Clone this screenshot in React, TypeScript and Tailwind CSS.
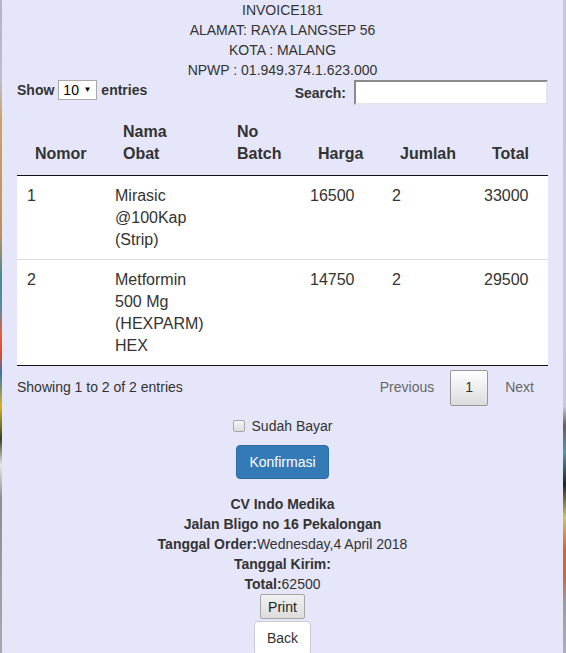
import React from 'react';

const items = [
  { no: '1', nama: 'Mirasic @100Kap (Strip)', batch: '', harga: '16500', jumlah: '2', total: '33000' },
  { no: '2', nama: 'Metformin 500 Mg (HEXPARM) HEX', batch: '', harga: '14750', jumlah: '2', total: '29500' },
];

const headers = ['Nomor', 'Nama Obat', 'No Batch', 'Harga', 'Jumlah', 'Total'];
const widths = ['w-[88px]', 'w-[114px]', 'w-[81px]', 'w-[82px]', 'w-[92px]', 'w-[74px]'];

export default function App() {
  return (
    <div className="flex min-h-screen font-['Liberation_Sans',Arial,sans-serif] text-[14px] text-[#333]">
      {/* bits of the page background showing at the edges */}
      <div className="w-[2px] shrink-0 bg-[linear-gradient(to_bottom,#b4b4c4_0%,#c0bccc_12%,#c9a46a_18%,#b89060_36%,#4c8a8c_42%,#5a8aa0_47%,#e0603c_51%,#d84c30_54%,#3876a8_57%,#d4b428_62%,#344420_67%,#e8e4e0_71%,#8e8e90_76%,#a8a8b0_100%)]" />
      <div className="flex-1 bg-[#e6e6fa] px-[15px]">
        <div className="text-center leading-[20px]">
          <div>INVOICE181</div>
          <div>ALAMAT: RAYA LANGSEP 56</div>
          <div>KOTA : MALANG</div>
          <div>NPWP : 01.949.374.1.623.000</div>
        </div>

        <div className="flex items-start justify-between">
          <div className="flex h-[20px] items-center font-bold">
            <span>Show</span>
            <div className="mx-[4px] flex h-[20px] w-[39px] items-center justify-between border border-[#a9a9a9] bg-white pl-[4px] pr-[5px] font-normal text-black">
              <span>10</span>
              <span className="text-[8px]">▼</span>
            </div>
            <span>entries</span>
          </div>
          <div className="flex items-center font-bold">
            <span className="mr-[8px] mt-[2px]">Search:</span>
            <input
              type="text"
              className="h-[25px] w-[194px] border-2 border-b-[#e4e4ec] border-l-[#8a8a8a] border-r-[#e4e4ec] border-t-[#8a8a8a] bg-white outline-none"
            />
          </div>
        </div>

        <table className="mt-[5px] w-full table-fixed border-collapse text-[16px] leading-[22px]">
          <colgroup>
            {widths.map((w, i) => (
              <col key={i} className={w} />
            ))}
          </colgroup>
          <thead>
            <tr>
              {headers.map((h) => (
                <th key={h} className="border-b border-[#111] px-[18px] pb-[10px] pt-[11px] text-left align-bottom font-bold">
                  {h}
                </th>
              ))}
            </tr>
          </thead>
          <tbody className="bg-white">
            {items.map((r, i) => (
              <tr key={r.no} className={i > 0 ? 'border-t border-[#ddd]' : ''}>
                <td className="px-[10px] pb-[8px] pt-[9px] align-top">{r.no}</td>
                <td className="px-[10px] pb-[8px] pt-[9px] align-top">{r.nama}</td>
                <td className="px-[10px] pb-[8px] pt-[9px] align-top">{r.batch}</td>
                <td className="px-[10px] pb-[8px] pt-[9px] align-top">{r.harga}</td>
                <td className="px-[10px] pb-[8px] pt-[9px] align-top">{r.jumlah}</td>
                <td className="px-[10px] pb-[8px] pt-[9px] align-top">{r.total}</td>
              </tr>
            ))}
          </tbody>
          <tfoot>
            <tr>
              <td colSpan={6} className="border-t border-[#111] p-0" />
            </tr>
          </tfoot>
        </table>

        <div className="mt-[3px] flex items-center justify-between">
          <span>Showing 1 to 2 of 2 entries</span>
          <div className="flex items-center text-[#666]">
            <span className="px-[16px] py-[8px]">Previous</span>
            <span className="flex h-[36px] w-[38px] items-center justify-center rounded-[2px] border border-[#979797] bg-[linear-gradient(to_bottom,#fff,#dcdcdc)] text-[#333]">
              1
            </span>
            <span className="pl-[17px] pr-[14px] py-[8px]">Next</span>
          </div>
        </div>

        <div className="mt-[10px] flex items-center justify-center leading-[20px]">
          <span className="mr-[7px] h-[12px] w-[12px] rounded-[2px] border border-[#a8a8a8] bg-[linear-gradient(to_bottom,#f4f4f4,#dcdcdc)]" />
          <span>Sudah Bayar</span>
        </div>

        <div className="mt-[9px] flex justify-center">
          <button className="rounded-[4px] border border-[#2e6da4] bg-[#337ab7] px-[12px] py-[6px] leading-[20px] text-white">
            Konfirmasi
          </button>
        </div>

        <div className="mt-[15px] text-center leading-[20px]">
          <div className="font-bold">CV Indo Medika</div>
          <div className="font-bold">Jalan Bligo no 16 Pekalongan</div>
          <div>
            <b>Tanggal Order:</b>Wednesday,4 April 2018
          </div>
          <div className="font-bold">Tanggal Kirim:</div>
          <div>
            <b>Total:</b>62500
          </div>
        </div>

        <div className="flex flex-col items-center">
          <button className="h-[25px] rounded-[2px] border border-[#a6a6a6] bg-[linear-gradient(to_bottom,#f0f0f0,#dddddd)] px-[7px] leading-[20px] text-[#222]">
            Print
          </button>
          <button className="mt-[2px] rounded-[4px] border border-[#ccc] bg-white px-[12px] py-[6px] leading-[20px]">
            Back
          </button>
        </div>
      </div>
      <div className="w-[3px] shrink-0 bg-[linear-gradient(to_bottom,#c8c8d8_0%,#cacadc_62%,#6a5a58_65%,#5a96a4_69%,#242424_74%,#d2c266_79%,#d46432_84%,#c86a3a_88%,#9a9aa0_92%,#b0b0b8_100%)]" />
    </div>
  );
}
